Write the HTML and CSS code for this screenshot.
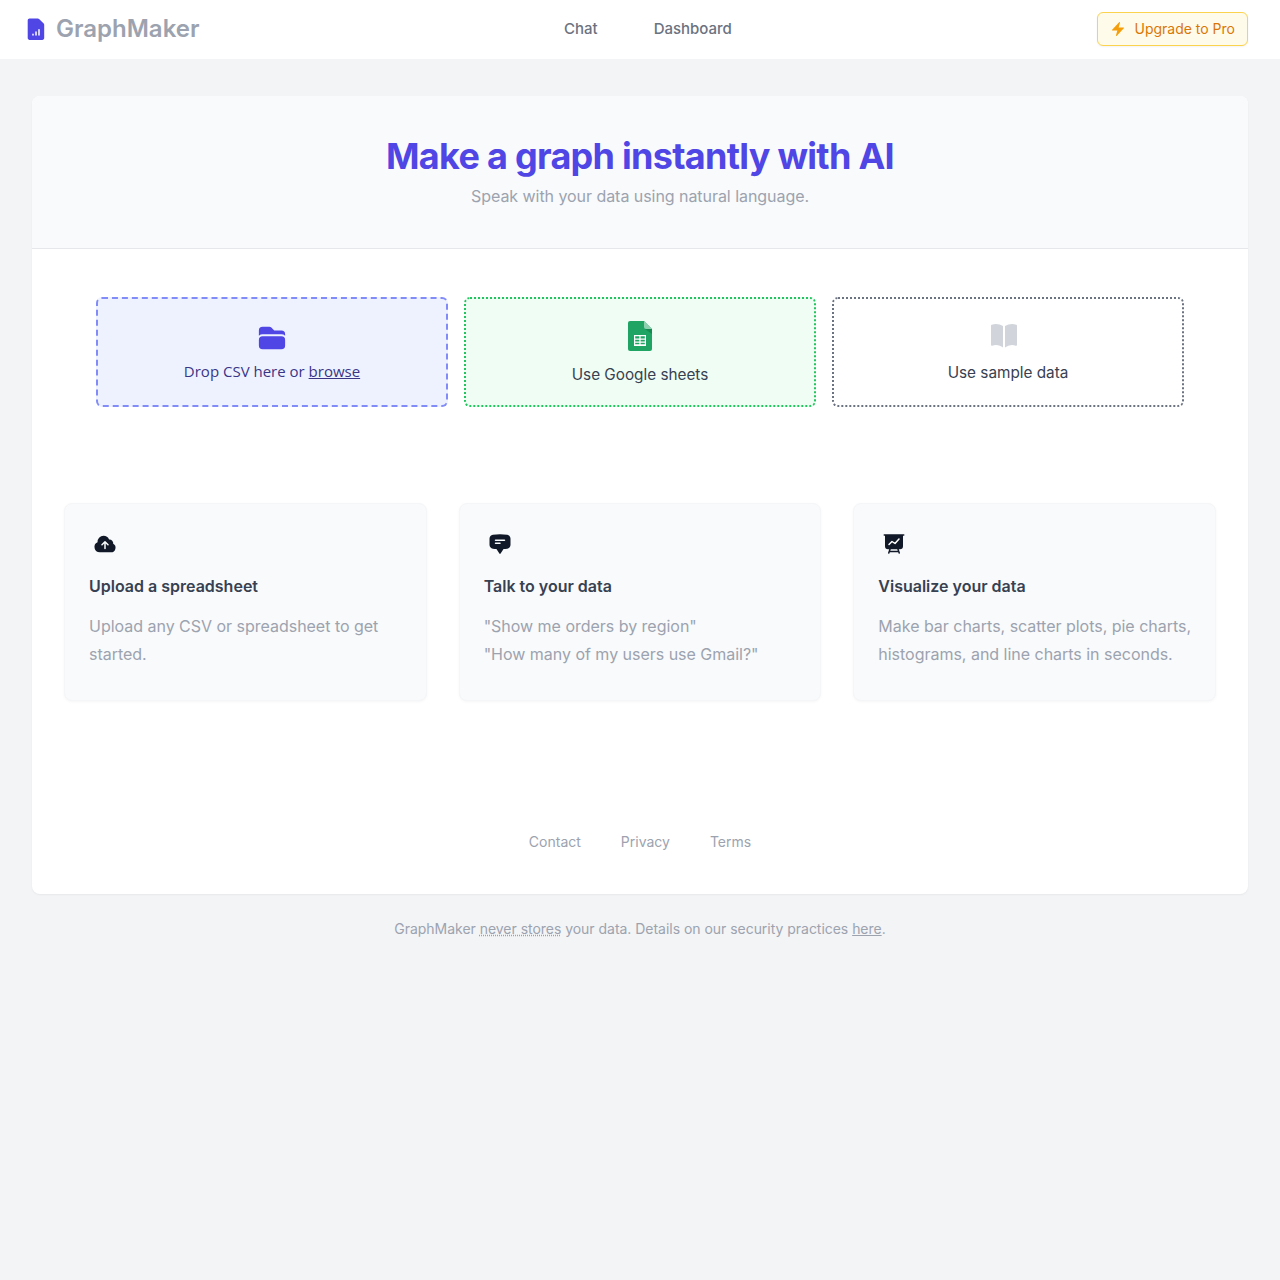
FILE: index.html
```html
<!DOCTYPE html>
<html lang="en">

<head>
    <meta charset="UTF-8">
    <meta name="viewport" content="width=device-width, initial-scale=1.0">
    <title>GraphMaker</title>
    <link rel="stylesheet" href="styles.css">
</head>

<body>
    <header class="topbar">
        <a class="logo" href="#">
            <svg class="logo-icon" viewBox="0 0 24 24">
                <path fill="#4f46e5" d="M5.6 1.5h8.2c.5 0 1 .2 1.3.5l4.6 4.6c.3.3.5.8.5 1.3v13.2c0 1-.8 1.9-1.9 1.9H5.6c-1 0-1.9-.8-1.9-1.9V3.4c0-1 .8-1.9 1.9-1.9zM9.75 17.25a.75.75 0 00-1.5 0V18a.75.75 0 001.5 0v-.75zm2.25-3a.75.75 0 01.75.75v3a.75.75 0 01-1.5 0v-3a.75.75 0 01.75-.75zm3.75-1.5a.75.75 0 00-1.5 0V18a.75.75 0 001.5 0v-5.25z" fill-rule="evenodd" />
            </svg>
            <span class="logo-text">GraphMaker</span>
        </a>
        <nav class="nav-links">
            <a href="#">Chat</a>
            <a href="#">Dashboard</a>
        </nav>
        <button class="upgrade-button">
            <svg class="bolt-icon" viewBox="0 0 24 24">
                <path fill="#f59e0b" d="M14.615 1.595a.75.75 0 01.359.852L12.982 9.75h7.268a.75.75 0 01.548 1.262l-10.5 11.25a.75.75 0 01-1.272-.71l1.992-7.302H3.75a.75.75 0 01-.548-1.262l10.5-11.25a.75.75 0 01.913-.143z" />
            </svg>
            Upgrade to Pro
        </button>
    </header>

    <main class="page">
        <section class="card">
            <div class="hero">
                <h1>Make a graph instantly with AI</h1>
                <p>Speak with your data using natural language.</p>
            </div>

            <div class="options">
                <div class="option option-csv">
                    <svg class="folder-icon" viewBox="0 0 24 24">
                        <path fill="#4f46e5" d="M19.5 21a3 3 0 003-3v-4.5a3 3 0 00-3-3h-15a3 3 0 00-3 3V18a3 3 0 003 3h15zM1.5 10.146V6a3 3 0 013-3h5.379a2.25 2.25 0 011.59.659l2.122 2.121c.14.141.331.22.53.22H19.5a3 3 0 013 3v1.146A4.483 4.483 0 0019.5 9h-15a4.483 4.483 0 00-3 1.146z" />
                    </svg>
                    <span>Drop CSV here or <a href="#">browse</a></span>
                </div>
                <div class="option option-sheets">
                    <svg class="sheets-icon" viewBox="0 0 24 32">
                        <path fill="#1fa463" d="M2 1h14l8 8v20a2 2 0 01-2 2H2a2 2 0 01-2-2V3a2 2 0 012-2z" />
                        <path fill="#178a52" d="M17 9l7 5V9z" />
                        <path fill="#8ed1b1" d="M16 1l8 8h-6a2 2 0 01-2-2z" />
                        <path fill="#fff" fill-rule="evenodd" d="M6 15h12v11H6zm1.2 1.2v2.4h4.2v-2.4zm5.4 0v2.4h4.2v-2.4zm-5.4 3.6v1.8h4.2v-1.8zm5.4 0v1.8h4.2v-1.8zm-5.4 3v1.4h4.2v-1.4zm5.4 0v1.4h4.2v-1.4z" />
                    </svg>
                    <span>Use Google sheets</span>
                </div>
                <div class="option option-sample">
                    <svg class="book-icon" viewBox="0 0 24 24">
                        <path fill="#d1d5db" d="M11.25 4.533A9.707 9.707 0 006 3a9.735 9.735 0 00-3.25.555.75.75 0 00-.5.707v14.25a.75.75 0 001 .707A8.237 8.237 0 016 18.75c1.995 0 3.823.707 5.25 1.886V4.533zM12.75 20.636A8.214 8.214 0 0118 18.75c.966 0 1.89.166 2.75.47a.75.75 0 001-.708V4.262a.75.75 0 00-.5-.707A9.735 9.735 0 0018 3a9.707 9.707 0 00-5.25 1.533v16.103z" />
                    </svg>
                    <span>Use sample data</span>
                </div>
            </div>

            <div class="features">
                <div class="feature">
                    <svg class="feature-icon" viewBox="0 0 24 24">
                        <path fill="#111827" fill-rule="evenodd" d="M10.5 3.75a6 6 0 00-5.98 6.496A5.25 5.25 0 006.75 20.25H18a4.5 4.5 0 002.206-8.423 3.75 3.75 0 00-4.133-4.303A6.001 6.001 0 0010.5 3.75zm2.03 5.47a.75.75 0 00-1.06 0l-3 3a.75.75 0 101.06 1.06l1.72-1.72v4.94a.75.75 0 001.5 0v-4.94l1.72 1.72a.75.75 0 101.06-1.06l-3-3z" />
                    </svg>
                    <h3>Upload a spreadsheet</h3>
                    <p>Upload any CSV or spreadsheet to get started.</p>
                </div>
                <div class="feature">
                    <svg class="feature-icon" viewBox="0 0 24 24">
                        <path fill="#111827" fill-rule="evenodd" d="M4.848 2.771A49.144 49.144 0 0112 2.25c2.43 0 4.817.178 7.152.52 1.978.292 3.348 2.024 3.348 3.97v6.02c0 1.946-1.37 3.678-3.348 3.97a48.901 48.901 0 01-3.476.383.39.39 0 00-.297.17l-2.755 4.133a.75.75 0 01-1.248 0l-2.755-4.133a.39.39 0 00-.297-.17 48.9 48.9 0 01-3.476-.384c-1.978-.29-3.348-2.024-3.348-3.97V6.741c0-1.946 1.37-3.68 3.348-3.97zM6.75 8.25a.75.75 0 01.75-.75h9a.75.75 0 010 1.5h-9a.75.75 0 01-.75-.75zm.75 2.25a.75.75 0 000 1.5H12a.75.75 0 000-1.5H7.5z" />
                    </svg>
                    <h3>Talk to your data</h3>
                    <p>"Show me orders by region"<br>"How many of my users use Gmail?"</p>
                </div>
                <div class="feature">
                    <svg class="feature-icon" viewBox="0 0 24 24">
                        <path fill="#111827" fill-rule="evenodd" d="M2.25 2.25a.75.75 0 000 1.5H3v10.5a3 3 0 003 3h1.21l-1.172 3.513a.75.75 0 001.424.474l.329-.987h8.418l.33.987a.75.75 0 001.422-.474l-1.17-3.513H18a3 3 0 003-3V3.75h.75a.75.75 0 000-1.5H2.25zm6.04 16.5l.5-1.5h6.42l.5 1.5H8.29z" />
                        <path fill="none" stroke="#fff" stroke-width="1.5" stroke-linecap="round" stroke-linejoin="round" d="M7 12.5l3-3 3 2 4-4.5" />
                    </svg>
                    <h3>Visualize your data</h3>
                    <p>Make bar charts, scatter plots, pie charts, histograms, and line charts in seconds.</p>
                </div>
            </div>

            <div class="card-links">
                <a href="#">Contact</a>
                <a href="#">Privacy</a>
                <a href="#">Terms</a>
            </div>
        </section>

        <p class="security-note">GraphMaker <span class="dotted">never stores</span> your data. Details on our security practices <a href="#">here</a>.</p>
    </main>
</body>

</html>
```

FILE: styles.css
```css
* {
    box-sizing: border-box;
}

body {
    margin: 0;
    min-height: 1280px;
    font-family: Inter, "Liberation Sans", sans-serif;
    background-color: #f3f4f6;
    color: #374151;
}

a {
    color: inherit;
}

.topbar {
    display: flex;
    align-items: center;
    height: 59px;
    padding: 0 32px 2px 24px;
    background-color: #fff;
}

.logo {
    display: flex;
    align-items: center;
    gap: 8px;
    width: 540px;
    text-decoration: none;
}

.logo-icon {
    width: 24px;
    height: 24px;
}

.logo-text {
    font-size: 24px;
    font-weight: 600;
    color: #9ca3af;
}

.nav-links {
    display: flex;
    gap: 56px;
    margin-top: 1px;
}

.nav-links a {
    font-size: 15px;
    font-weight: 500;
    line-height: 18px;
    color: #6b7280;
    text-decoration: none;
}

.upgrade-button {
    display: flex;
    align-items: center;
    gap: 8px;
    height: 34px;
    margin-left: auto;
    padding: 0 12px;
    font-family: inherit;
    font-size: 14px;
    color: #d97706;
    background-color: #fffbeb;
    border: 1px solid #fcd34d;
    border-radius: 6px;
    box-shadow: 0 1px 2px rgba(0, 0, 0, 0.05);
}

.bolt-icon {
    width: 16px;
    height: 16px;
}

.page {
    padding: 37px 32px 0;
}

.card {
    background-color: #fff;
    border-radius: 8px;
    box-shadow: 0 1px 2px rgba(0, 0, 0, 0.05);
    overflow: hidden;
}

.hero {
    height: 153px;
    padding-top: 38px;
    text-align: center;
    background-color: #f9fafb;
    border-bottom: 1px solid #e5e7eb;
}

.hero h1 {
    margin: 0;
    font-size: 36px;
    line-height: 44px;
    font-weight: 700;
    letter-spacing: -0.72px;
    color: #4f46e5;
}

.hero p {
    margin: 6px 0 0;
    font-size: 16px;
    line-height: 24px;
    letter-spacing: -0.05px;
    color: #9ca3af;
}

.options {
    display: grid;
    grid-template-columns: repeat(3, 1fr);
    gap: 16px;
    padding: 48px 64px 0;
}

.option {
    display: flex;
    flex-direction: column;
    align-items: center;
    justify-content: center;
    height: 110px;
    font-size: 15.3px;
    color: #374151;
    border-radius: 6px;
}

.option-csv {
    gap: 8px;
    font-family: "Open Sans", "Noto Sans", sans-serif;
    font-size: 15px;
    color: #3b3585;
    background-color: #eef2ff;
    border: 2px dashed #818cf8;
}

.option-sheets {
    gap: 13px;
    padding-bottom: 1px;
    background-color: #f0fdf4;
    border: 2px dotted #22c55e;
}

.option-sample {
    gap: 11px;
    padding-bottom: 3px;
    border: 2px dotted #6b7280;
}

.folder-icon {
    width: 30px;
    height: 30px;
}

.book-icon {
    width: 32px;
    height: 32px;
    margin-right: 8px;
}

.sheets-icon {
    width: 24px;
    height: 32px;
}

.features {
    display: grid;
    grid-template-columns: repeat(3, 1fr);
    gap: 32px;
    margin-top: 96px;
    padding: 0 32px;
}

.feature {
    height: 198px;
    padding: 28px 24px 0;
    background-color: #f9fafb;
    border: 1px solid #f5f6f8;
    border-radius: 8px;
    box-shadow: 0 1px 3px rgba(0, 0, 0, 0.04);
}

.feature-icon {
    display: block;
    width: 24px;
    height: 24px;
    margin-left: 4px;
}

.feature h3 {
    margin: 18px 0 0;
    font-size: 16px;
    line-height: 24px;
    font-weight: 600;
    color: #374151;
}

.feature p {
    margin: 14px 0 0;
    font-size: 16px;
    line-height: 28px;
    letter-spacing: -0.02px;
    color: #9ca3af;
}

.card-links {
    display: flex;
    justify-content: center;
    gap: 40px;
    height: 62px;
    margin-top: 131px;
    font-size: 14px;
    line-height: 20px;
    color: #9ca3af;
}

.card-links a {
    text-decoration: none;
}

.security-note {
    margin: 25px 0 0;
    text-align: center;
    font-size: 14px;
    line-height: 20px;
    letter-spacing: -0.03px;
    color: #9ca3af;
}

.dotted {
    text-decoration: underline dotted;
}
```
